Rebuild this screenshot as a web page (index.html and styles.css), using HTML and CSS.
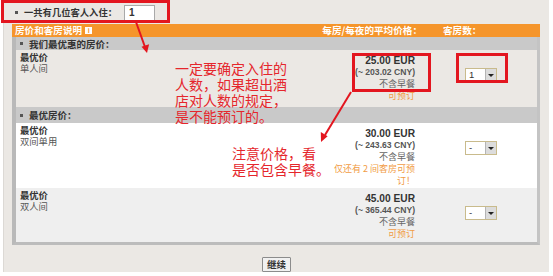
FILE: index.html
```html
<!DOCTYPE html>
<html lang="zh-CN">
<head>
  <meta charset="UTF-8">
  <title>房价和客房说明</title>
  <link rel="stylesheet" href="styles.css">
</head>
<body>
  <div class="shot">
    <div class="page">
      <div class="guests">
        <span class="bullet"></span>一共有几位客人入住：<span class="field">1</span>
      </div>

      <div class="rates">
        <div class="rates-head">
          <div class="head-title">房价和客房说明 <span class="info">i</span></div>
          <div class="head-price">每房/每夜的平均价格：</div>
          <div class="head-qty">客房数：</div>
        </div>

        <div class="rates-body">
          <div class="group"><span class="bullet"></span>我们最优惠的房价：</div>
          <div class="rate rate-first">
            <div class="rate-name"><b>最优价</b><span>单人间</span></div>
            <div class="rate-price">
              <b class="amount">25.00 EUR</b>
              <span class="cny">(~ 203.02 CNY)</span>
              <span class="meal">不含早餐</span>
              <span class="avail">可预订</span>
            </div>
            <div class="rate-qty">
              <span class="pick"><span class="pick-val">1</span><span class="pick-btn"><i></i></span></span>
            </div>
          </div>

          <div class="group group-tall"><span class="bullet"></span>最优房价：</div>
          <div class="rate rate-second">
            <div class="rate-name"><b>最优价</b><span>双间单用</span></div>
            <div class="rate-price">
              <b class="amount">30.00 EUR</b>
              <span class="cny">(~ 243.63 CNY)</span>
              <span class="meal">不含早餐</span>
              <span class="avail">仅还有 2 间客房可预订！</span>
            </div>
            <div class="rate-qty">
              <span class="pick"><span class="pick-val">-</span><span class="pick-btn"><i></i></span></span>
            </div>
          </div>

          <div class="rate rate-third">
            <div class="rate-name"><b>最优价</b><span>双人间</span></div>
            <div class="rate-price">
              <b class="amount">45.00 EUR</b>
              <span class="cny">(~ 365.44 CNY)</span>
              <span class="meal">不含早餐</span>
              <span class="avail">可预订</span>
            </div>
            <div class="rate-qty">
              <span class="pick"><span class="pick-val">-</span><span class="pick-btn"><i></i></span></span>
            </div>
          </div>
        </div>
      </div>

      <div class="actions">
        <button class="btn">继续</button>
      </div>
    </div>

    <!-- annotations drawn over the page -->
    <p class="note note-guests">一定要确定入住的人数，如果超出酒店对人数的规定，是不能预订的。</p>
    <p class="note note-price">注意价格，看<br>是否包含早餐。</p>
    <svg class="marks" width="553" height="276" viewBox="0 0 553 276">
      <g fill="none" stroke="#e3161f" stroke-width="3">
        <rect x="2.5" y="1.5" width="166" height="20"/>
        <rect x="353.5" y="54.5" width="76" height="36"/>
        <rect x="457.5" y="54.5" width="49" height="27"/>
      </g>
      <g stroke="#e3161f" stroke-width="2" fill="#e3161f">
        <line x1="136" y1="22" x2="145" y2="47"/>
        <polygon points="147,53 141.5,46.8 149.1,44.2" stroke="none"/>
        <line x1="351" y1="92" x2="325" y2="135"/>
        <polygon points="321,142 320.8,132.1 327.6,136.3" stroke="none"/>
      </g>
    </svg>
  </div>
</body>
</html>
```

FILE: styles.css
```css
body {
  margin: 0;
  background: #fff;
  font-family: "Noto Sans CJK SC", "Liberation Sans", sans-serif;
  color: #333;
}
.shot {
  position: relative;
  width: 553px;
  height: 276px;
  overflow: hidden;
}
.page {
  margin-left: 3px;
  width: 546px;
  height: 272px;
  background: #ebe8e4;
  border-left: 1px solid #dcd9d5;
  box-sizing: border-box;
  padding-left: 8px;
}
.bullet {
  display: inline-block;
  width: 3px;
  height: 3px;
  background: #555;
  margin-right: 6px;
}
.guests {
  height: 24px;
  display: flex;
  align-items: center;
  padding-left: 3px;
  font-size: 9.3px;
  font-weight: 700;
}
.field {
  width: 25px;
  height: 14px;
  margin-left: 7px;
  background: #fff;
  border: 1px solid #a9a9a9;
  font-family: "Liberation Sans", sans-serif;
  font-size: 10px;
  line-height: 14px;
  padding-left: 4px;
  box-sizing: content-box;
  margin-top: 1px;
}
.rates {
  width: 528px;
}
.rates-head {
  display: grid;
  grid-template-columns: 1fr 102px 118px;
  height: 13px;
  background: #f5952b;
  color: #fff;
  font-weight: 700;
  font-size: 9.6px;
  line-height: 13px;
}
.head-title {
  padding-left: 3px;
  display: flex;
  align-items: center;
}
.info {
  display: inline-block;
  width: 7px;
  height: 7px;
  margin-left: 3px;
  background: #fff;
  color: #f5952b;
  font-family: "Liberation Sans", sans-serif;
  font-size: 7px;
  line-height: 7px;
  text-align: center;
}
.head-price {
  text-align: right;
}
.head-qty {
  padding-left: 21px;
}
.rates-body {
  border-left: 4px solid #b9b9b9;
  border-right: 3px solid #c4c4c4;
  border-bottom: 3px solid #bcbcbc;
}
.group {
  height: 13px;
  display: flex;
  align-items: center;
  padding-left: 4px;
  background: #c9c9c9;
  font-size: 9.5px;
  font-weight: 700;
}
.group-tall {
  height: 16px;
}
.rate {
  display: grid;
  grid-template-columns: 1fr 102px 115px;
}
.rate-first {
  height: 57px;
  background: #ebe8e4;
}
.rate-second {
  height: 65px;
  background: #fff;
}
.rate-third {
  height: 54px;
  background: #efefef;
}
.rate-name {
  padding: 2px 0 0 4px;
  font-size: 9.3px;
  line-height: 11px;
}
.rate-name b,
.rate-name span {
  display: block;
}
.rate-name span {
  color: #555;
}
.rate-price {
  padding: 5px 7px 0 13px;
  text-align: right;
  font-size: 9px;
  line-height: 11.7px;
}
.rate-price span,
.rate-price b {
  display: block;
}
.amount {
  font-family: "Liberation Sans", sans-serif;
  font-size: 10.2px;
  color: #333;
}
.cny {
  font-family: "Liberation Sans", sans-serif;
  font-weight: 700;
  font-size: 8.6px;
  color: #555;
}
.meal {
  color: #666;
}
.avail {
  color: #f19c45;
}
.rate-qty {
  padding: 9px 0 0 43px;
}
.pick {
  display: inline-flex;
  height: 14px;
  border: 1px solid #c9bb8c;
  background: #fff;
  box-sizing: border-box;
}
.pick-val {
  width: 16px;
  padding-left: 3px;
  font-family: "Liberation Sans", sans-serif;
  font-size: 9.5px;
  line-height: 12px;
}
.pick-btn {
  width: 10px;
  background: #dcdcdc;
  border-left: 1px solid #b5b5b5;
  display: flex;
  align-items: center;
  justify-content: center;
}
.pick-btn i {
  width: 0;
  height: 0;
  border-left: 3px solid transparent;
  border-right: 3px solid transparent;
  border-top: 3px solid #222;
}
.actions {
  display: flex;
  justify-content: center;
  padding-top: 12px;
  padding-right: 8px;
}
.btn {
  width: 29px;
  height: 15px;
  padding: 0;
  background: #f1f1f1;
  border: 1px solid #8c8c8c;
  border-radius: 1px;
  font-family: "Noto Sans CJK SC", sans-serif;
  font-size: 9.5px;
  font-weight: 700;
  color: #333;
  line-height: 13px;
}
.note {
  position: absolute;
  margin: 0;
  color: #e5262c;
  font-size: 14px;
  line-height: 16px;
}
.note-guests {
  left: 175px;
  top: 60px;
  width: 113px;
}
.note-price {
  left: 232px;
  top: 145px;
}
.marks {
  position: absolute;
  left: 0;
  top: 0;
}
```
